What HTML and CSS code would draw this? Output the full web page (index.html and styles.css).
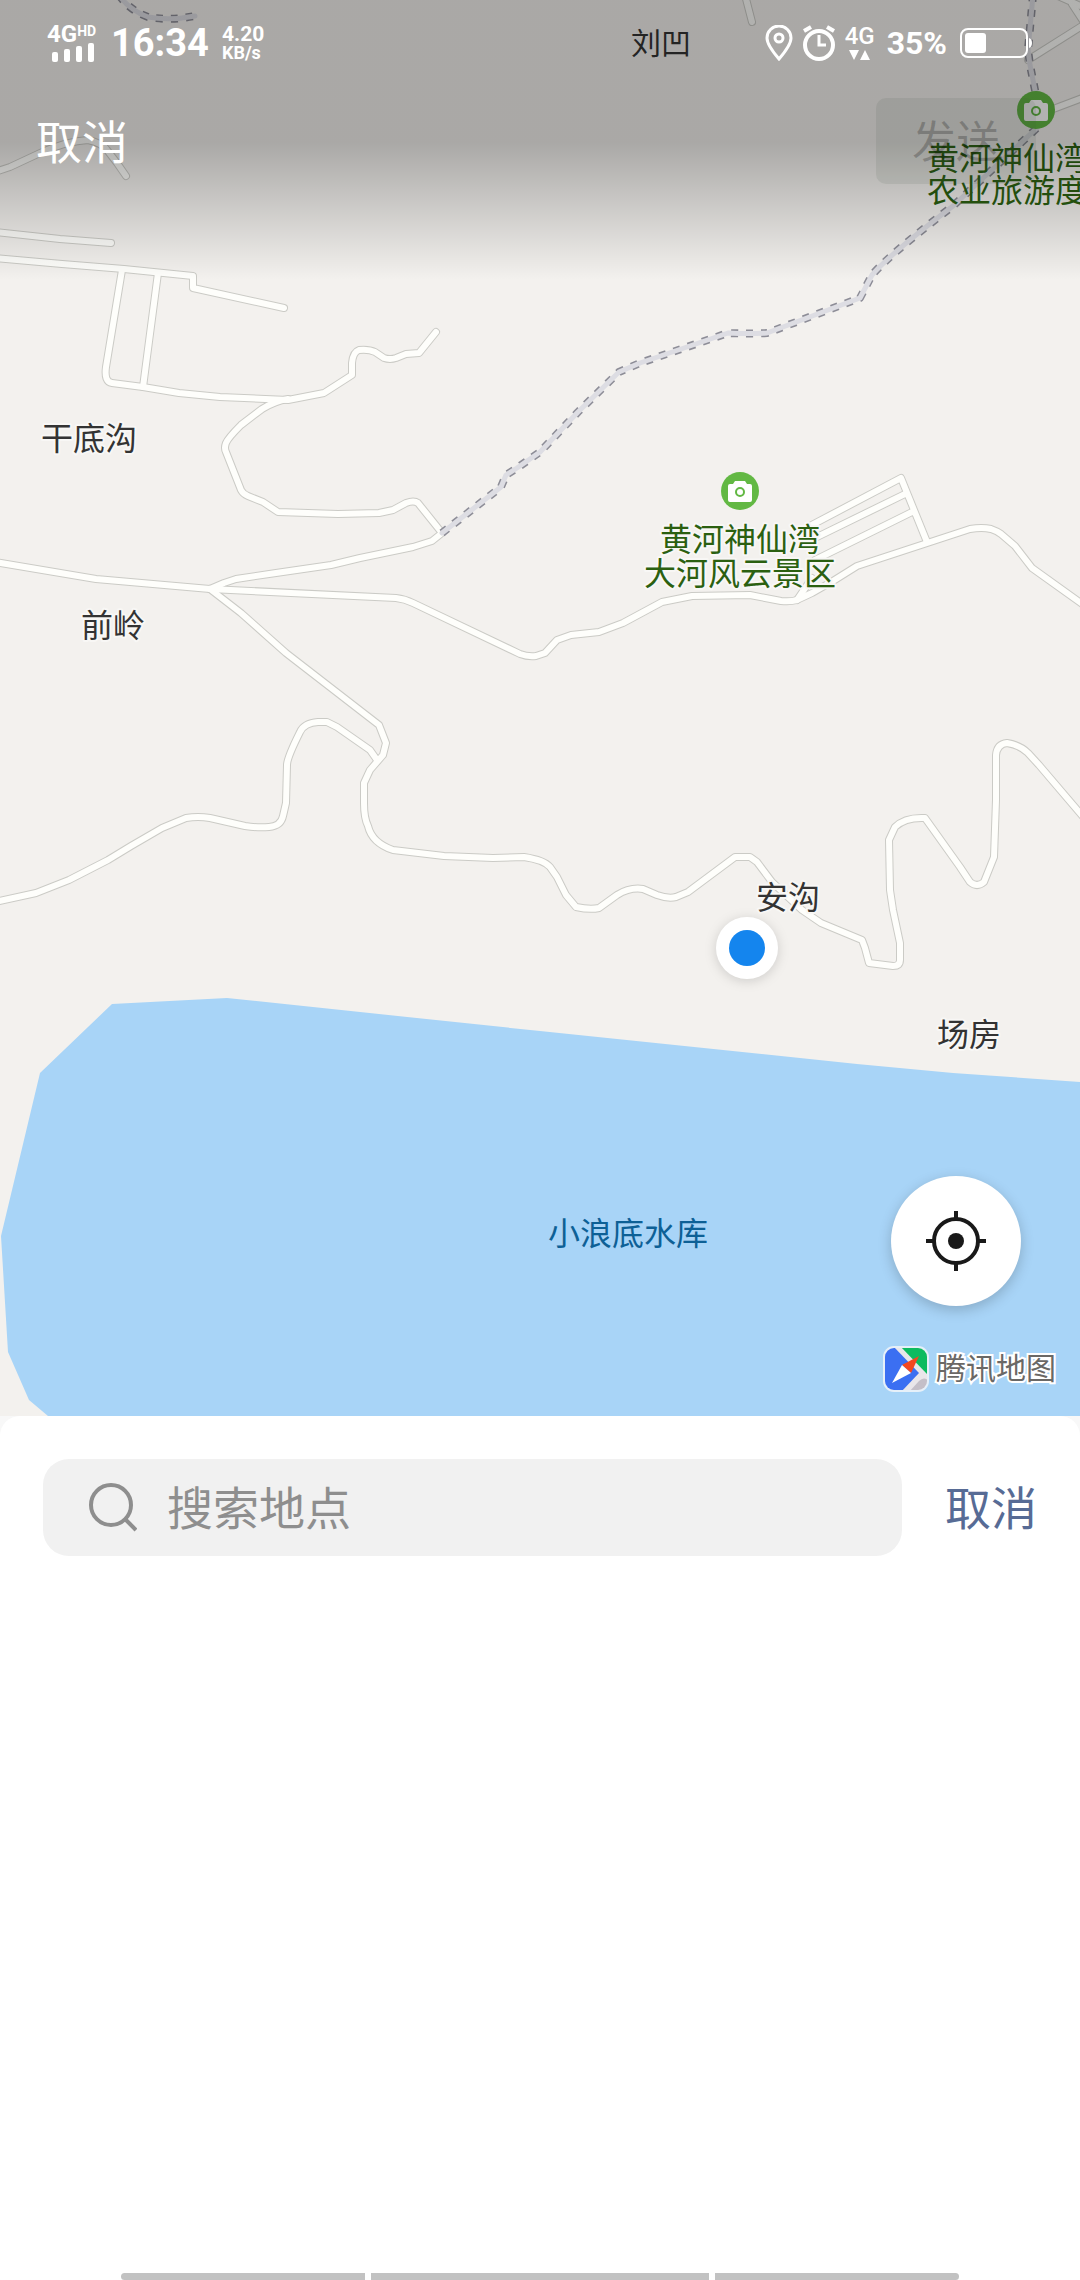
FILE: index.html
```html
<!DOCTYPE html>
<html lang="zh-CN">
<head>
<meta charset="utf-8">
<meta name="viewport" content="width=device-width, initial-scale=1">
<title>发送位置</title>
<link rel="stylesheet" href="styles.css">
</head>
<body>
<main class="screen">
  <section class="map">
    <svg class="map-canvas" viewBox="0 0 1080 1416" preserveAspectRatio="xMidYMid slice" aria-label="地图">
      <defs>
        <g id="roads">
          <path d="M-5 172L10 167L40 153Q67 141 88 140Q102 143 107 150L117 163L126 176"/>
          <path d="M745 -5L752 22"/>
          <path d="M1028 60L1085 24M1058 -4L1085 8M1072 4L1085 24M1040 114L1085 97"/>
          <path d="M-5 232L60 239L111 243"/>
          <path d="M-5 258L62 264L124 269L193 276L193 288L284 308"/>
          <path d="M122 270L106 367Q104 382 112 383L143 387L179 393L220 397L288 400L324 393L352 375L352 363Q353 352 359 350Q369 349 375 352L384 358Q390 360 396 358L406 354L419 353L436 332"/>
          <path d="M158 273L143 387"/>
          <path d="M288 399Q275 401 262 409L241 425Q228 438 226 443Q224 448 226 452L241 490Q243 494 248 496L263 502L278 512L338 514L379 513L393 510L406 503Q414 500 418 503L442 533L432 541L413 547L360 558L331 565L276 573L236 579L224 583L210 589"/>
          <path d="M-5 562L96 579L210 589L396 598Q405 599 413 603L520 654Q528 657 536 656L545 653L557 640L571 635L599 632L623 623L662 602L692 596L750 595L781 601Q790 602 797 600L812 593L833 581L857 566L970 529Q982 527 991 529Q997 531 1001 534L1015 546L1032 568L1085 606"/>
          <path d="M797 600L812 578M808 527L901 478L927 542M815 538L907 493M815 560L912 512"/>
          <path d="M210 589L241 613L286 653L379 725L386 743L383 755L370 770L364 783L364 803Q364 818 368 826Q372 843 393 850L444 856L493 858L524 857Q544 860 550 867L557 877L566 895L576 907Q590 910 599 908L617 895Q630 887 643 889L657 895Q668 899 676 897L688 892L735 857L750 857L757 862L772 882L802 910L821 923L862 940L865 948L869 963L893 966Q900 966 900 960L900 943L893 910L890 890L889 840L895 827Q905 817 925 818L960 867L970 882Q977 888 984 882L994 857L996 800L996 755Q997 744 1007 743Q1020 745 1028 753L1039 765L1085 819"/>
          <path d="M-5 902L36 893L69 880L108 860L131 846L162 828L186 818Q198 816 210 818L245 826Q258 828 269 827Q281 826 283 816L286 803L287 765Q287 758 300 732Q304 723 318 722L327 722L337 727L370 750L377 760"/>
        </g>
        <g id="trails">
          <path d="M442 533L501 487L506 475L517 468L540 452L578 412L619 372L640 363L728 333Q750 334 767 333L860 298L872 275Q890 254 953 206L1037 128L1036 95L1030 65L1028 50L1033 -5"/>
          <path d="M119 -5Q129 10 148 17Q170 21 195 16"/>
        </g>
        <g id="camera-pin">
          <circle r="19" fill="#62b843"/>
          <path d="M-10 -7H-7L-5 -10H5L7 -7H10Q12 -7 12 -5V9Q12 11 10 11H-10Q-12 11 -12 9V-5Q-12 -7 -10 -7Z" fill="#fff"/>
          <circle cy="1" r="4" fill="none" stroke="#62b843" stroke-width="2"/>
        </g>
      </defs>
      <rect class="land" x="-2000" y="-2000" width="5000" height="5000"/>
      <path class="water" d="M227 998L112 1004L40 1073L1 1236L8 1352L29 1400L48 1416H1080V1082L953 1073L857 1064L540 1031Z"/>
      <use href="#roads" class="road-edge"/>
      <use href="#roads" class="road-fill"/>
      <use href="#trails" class="trail-edge"/>
      <use href="#trails" class="trail-fill"/>
      <use href="#camera-pin" x="740" y="491"/>
      <use href="#camera-pin" x="1036" y="110"/>
      <g class="place">
        <text class="small" x="661" y="54">刘凹</text>
        <text x="89" y="450">干底沟</text>
        <text x="113" y="637">前岭</text>
        <text x="788" y="909">安沟</text>
        <text x="969" y="1046">场房</text>
      </g>
      <g class="place scenic">
        <text x="740" y="551">黄河神仙湾</text>
        <text x="740" y="585">大河风云景区</text>
        <text class="from-start" x="927" y="170">黄河神仙湾</text>
        <text class="from-start" x="927" y="202">农业旅游度</text>
      </g>
      <text class="lake" x="628" y="1245">小浪底水库</text>
      <circle class="here-ring" cx="747" cy="948" r="31"/>
      <circle class="here-dot" cx="747" cy="948" r="18"/>
    </svg>

    <header class="top">
      <div class="status">
        <div class="status-side">
          <div class="carrier">
            <div class="carrier-name">4G<sup>HD</sup></div>
            <svg width="42" height="19" viewBox="0 0 42 19" aria-hidden="true"><g fill="#fff"><rect y="9" width="6" height="10" rx="2"/><rect x="12" y="6" width="6" height="13" rx="2"/><rect x="24" y="3" width="6" height="16" rx="2"/><rect x="36" width="6" height="19" rx="2"/></g></svg>
          </div>
          <time class="clock">16:34</time>
          <div class="speed"><span class="speed-value">4.20</span><span>KB/s</span></div>
        </div>
        <div class="status-side status-right">
          <svg width="28" height="36" viewBox="0 0 28 36" fill="none" stroke="#fff" stroke-width="3" aria-hidden="true"><path d="M14 34Q2 20 2 13A12 12 0 0 1 26 13Q26 20 14 34Z"/><circle cx="14" cy="13" r="4"/></svg>
          <svg width="34" height="36" viewBox="0 0 34 36" fill="none" stroke="#fff" stroke-width="4" aria-hidden="true"><circle cx="17" cy="20" r="14"/><path d="M17 10V20H24" stroke-width="3"/><path d="M2 6L9 2M25 2L32 6"/></svg>
          <div class="data"><span>4G</span>
            <svg width="22" height="10" viewBox="0 0 22 10" aria-hidden="true"><path d="M0 0H10L5 10ZM11 10H21L16 0Z" fill="#fff"/></svg>
          </div>
          <span class="percent">35%</span>
          <svg class="battery" width="72" height="30" viewBox="0 0 72 30" aria-hidden="true"><rect x="1" y="1" width="66" height="28" rx="7" fill="none" stroke="#fff" stroke-width="2"/><rect x="5" y="5" width="21" height="20" rx="3" fill="#fff"/><path d="M69 10Q72 11 72 15T69 20Z" fill="#fff"/></svg>
        </div>
      </div>
      <div class="actions">
        <button class="cancel" type="button">取消</button>
        <button class="send" type="button" disabled>发送</button>
      </div>
    </header>

    <div class="map-tools">
      <button class="locate" type="button" aria-label="定位">
        <svg width="60" height="60" viewBox="0 0 60 60" fill="none" stroke="#191919" stroke-width="4" aria-hidden="true"><circle cx="30" cy="30" r="22"/><circle cx="30" cy="30" r="8" fill="#191919" stroke="none"/><path d="M30 0V8M30 52V60M0 30H8M52 30H60"/></svg>
      </button>
      <div class="brand">
        <svg width="46" height="46" viewBox="0 0 46 46" aria-hidden="true">
          <defs><clipPath id="tile"><rect x="2" y="2" width="42" height="42" rx="9"/></clipPath></defs>
          <rect width="46" height="46" rx="11" fill="#e6f0f9"/>
          <g clip-path="url(#tile)">
            <rect width="46" height="46" fill="#e9e6ea"/>
            <path d="M0 0H10L36 27L18 46H0Z" fill="#3b6ff2"/>
            <path d="M17 0H46V30Z" fill="#0dbb60"/>
            <path d="M46 46H26L36 35Q41 30 46 35Z" fill="#c4bfc8"/>
          </g>
          <path d="M36 10L19 19L28 27Z" fill="#f4471f"/>
          <path d="M9 37L19 19L28 27Z" fill="#fff"/>
        </svg>
        <span>腾讯地图</span>
      </div>
    </div>
  </section>

  <section class="sheet">
    <form class="search">
      <label class="field">
        <svg width="50" height="50" viewBox="0 0 50 50" fill="none" stroke="#8e8e8e" stroke-width="4" aria-hidden="true"><circle cx="24" cy="22" r="20"/><path d="M38 36L49 47"/></svg>
        <input type="text" placeholder="搜索地点" aria-label="搜索地点">
      </label>
      <button class="search-cancel" type="button">取消</button>
    </form>
    <div class="nav-bar"><i></i><i class="wide"></i><i></i></div>
  </section>
</main>
</body>
</html>
```
FILE: styles.css
```css
* {
  box-sizing: border-box;
}

body {
  margin: 0;
  font-family: Roboto, "Noto Sans CJK SC", sans-serif;
}

button {
  border: 0;
  padding: 0;
  background: none;
  font: inherit;
}

svg {
  display: block;
  flex: none;
}

.screen {
  display: flex;
  flex-direction: column;
  min-height: 100vh;
  background: #f8f8f8;
}

/* Map */
.map {
  position: relative;
  flex: 59 0 0;
  display: flex;
  flex-direction: column;
  justify-content: space-between;
  overflow: hidden;
}

.map-canvas {
  position: absolute;
  inset: 0;
  width: 100%;
  height: 100%;
}

.land {
  fill: #f3f1ee;
}

.water {
  fill: #a8d4f7;
}

.road-edge,
.road-fill,
.trail-edge,
.trail-fill {
  fill: none;
  stroke-linecap: round;
  stroke-linejoin: round;
}

.road-edge {
  stroke: #cbcbc6;
  stroke-width: 8px;
}

.road-fill {
  stroke: #fefefb;
  stroke-width: 6px;
}

.trail-edge {
  stroke: #8d8d97;
  stroke-width: 8px;
  stroke-linecap: butt;
  stroke-dasharray: 7 8;
}

.trail-fill {
  stroke: #dddde3;
  stroke-width: 5px;
}

.place text,
.lake {
  font-size: 32px;
  text-anchor: middle;
  fill: #333;
  stroke: #f8f7f5;
  stroke-width: 4px;
  stroke-linejoin: round;
  paint-order: stroke;
}

.place .small {
  font-size: 30px;
  stroke: none;
}

.scenic text {
  fill: #2b6010;
}

.scenic .from-start {
  text-anchor: start;
  stroke: none;
}

.lake {
  fill: #0d6096;
  stroke: none;
}

.here-ring {
  fill: #fff;
  filter: drop-shadow(0 2px 6px rgba(0, 0, 0, 0.15));
}

.here-dot {
  fill: #1485ee;
}

/* Status bar and actions over the map */
.top {
  position: relative;
  height: 280px;
  padding: 22px 44px 0 36px;
  color: #fff;
  background: linear-gradient(rgba(0, 0, 0, 0.3) 51%, rgba(0, 0, 0, 0));
}

.status {
  display: flex;
  justify-content: space-between;
  height: 42px;
  padding-left: 11px;
}

.status-side {
  display: flex;
  align-items: center;
  font-weight: 700;
}

.carrier {
  display: flex;
  flex-direction: column;
  align-items: flex-start;
  width: 64px;
}

.carrier svg {
  margin-left: 5px;
}

.carrier-name {
  display: flex;
  font-size: 24px;
  line-height: 18px;
}

.carrier-name sup {
  font-size: 14px;
  line-height: 12px;
}

.clock {
  width: 111px;
  font-size: 38px;
  line-height: 44px;
}

.speed {
  display: flex;
  flex-direction: column;
  font-size: 18px;
  line-height: 18px;
}

.speed-value {
  font-size: 21px;
  line-height: 20px;
}

.status-right {
  gap: 9px;
}

.data {
  display: flex;
  flex-direction: column;
  align-items: center;
  gap: 4px;
  font-size: 24px;
  font-weight: 500;
  line-height: 20px;
}

.percent {
  padding: 0 4px 0 3px;
  font-size: 32px;
  line-height: 40px;
}

.battery {
  margin-right: 4px;
}

.actions {
  display: flex;
  align-items: center;
  justify-content: space-between;
  height: 86px;
  margin-top: 34px;
  font-size: 46px;
  line-height: 60px;
}

.cancel,
.send {
  padding-top: 4px;
}

.cancel {
  color: #fff;
}

.send {
  width: 160px;
  height: 86px;
  border-radius: 10px;
  font-size: 44px;
  color: rgba(0, 0, 0, 0.22);
  background: rgba(60, 80, 60, 0.1);
}

.map-tools {
  position: relative;
  display: flex;
  flex-direction: column;
  align-items: flex-end;
  gap: 40px;
  padding: 0 24px 24px;
}

.locate {
  display: grid;
  place-items: center;
  width: 130px;
  height: 130px;
  margin-right: 35px;
  border-radius: 50%;
  background: #fff;
  box-shadow: 0 4px 14px rgba(0, 0, 0, 0.2);
}

.brand {
  display: flex;
  align-items: center;
  gap: 7px;
  font-size: 30px;
  line-height: 46px;
  color: #6a6866;
  -webkit-text-stroke: 4px #fff;
  paint-order: stroke fill;
}

/* Search sheet */
.sheet {
  flex: 36 0 0;
  display: flex;
  flex-direction: column;
  justify-content: space-between;
  border-radius: 20px 20px 0 0;
  background: #fff;
}

.search {
  display: flex;
  align-items: center;
  gap: 43px;
  padding: 43px 43px 0;
}

.field {
  flex: 1;
  display: flex;
  align-items: center;
  gap: 30px;
  height: 97px;
  padding: 0 44px;
  border-radius: 26px;
  background: #f1f1f1;
}

.field input {
  flex: 1;
  min-width: 0;
  border: 0;
  padding: 2px 0 0;
  outline: 0;
  background: none;
  font: inherit;
  font-size: 46px;
  line-height: 64px;
  color: #191919;
}

.field input::placeholder {
  color: #8e8e8e;
  opacity: 1;
}

.search-cancel {
  padding-top: 2px;
  font-size: 46px;
  line-height: 64px;
  color: #576b95;
}

.nav-bar {
  display: flex;
  gap: 6px;
  width: calc(100% - 242px);
  height: 7px;
  margin: 0 auto;
}

.nav-bar i {
  flex: 244;
  background: #c2c2c2;
}

.nav-bar .wide {
  flex: 338;
}

.nav-bar i:first-child {
  border-radius: 4px 0 0 4px;
}

.nav-bar i:last-child {
  border-radius: 0 4px 4px 0;
}
```
